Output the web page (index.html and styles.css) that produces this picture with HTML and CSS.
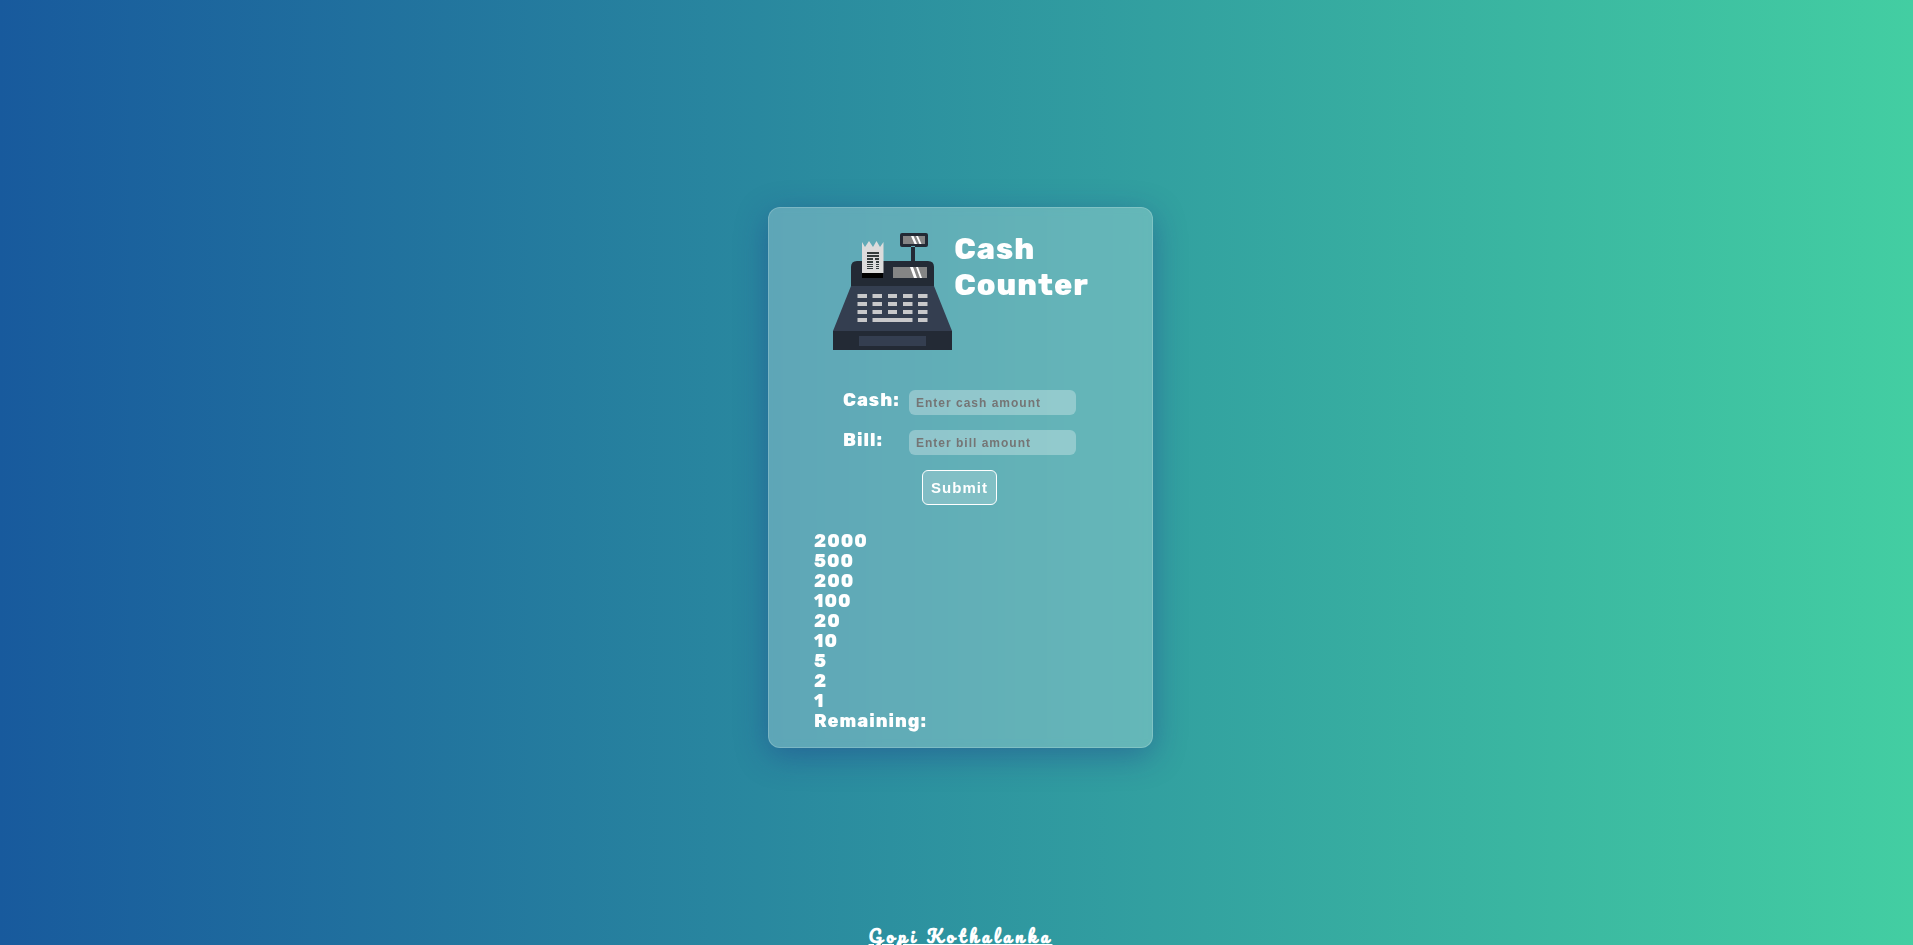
FILE: index.html
```html
<!DOCTYPE html>
<html lang="en">
<head>
<meta charset="utf-8">
<meta name="viewport" content="width=device-width, initial-scale=1">
<title>Cash Counter</title>
<link rel="stylesheet" href="styles.css">
</head>
<body>
<main class="page">
  <section class="card">
    <header class="card-header">
      <svg class="register" viewBox="0 0 120 120" aria-hidden="true">
        <path fill="#232a35" d="M79 13V40H83V13ZM70 0H94Q96 0 96 2V12Q96 14 94 14H70Q68 14 68 12V2Q68 0 70 0Z"/>
        <path fill="#858585" d="M71 3H93V11H71Z"/>
        <path fill="#fff" d="M79 3H81.500L85 11H82.500ZM84 3H86L89.500 11H87.500Z"/>
        <path fill="#232a35" d="M19 54V34Q19 28 25 28H96Q102 28 102 34V54Z"/>
        <path fill="#000" d="M30 39H51V45H30Z"/>
        <path fill="#dcdcdc" d="M30 9L33 14L37 8L41 14L44.500 8L48 14L51.500 9V40H30Z"/>
        <path fill="#343c3c" d="M35 19H47V21H35ZM35 22H47V24H35ZM35 25H41V27H35ZM35 28H41V30H35ZM35 31H41V32H35ZM35 33H41V34H35ZM35 35H41V36H35ZM43 25H47V27H43ZM44 28H47V30H44ZM44 31H47V32H44ZM44 33H47V34H44ZM44 35H47V36H44Z"/>
        <path fill="#858585" d="M61 34H95V45H61Z"/>
        <path fill="#fff" d="M78 34H81L85 45H82ZM84 34H86L90 45H88Z"/>
        <path fill="#343e50" d="M19 53H102L120 98H1Z"/>
        <path fill="#232a35" d="M1 98H120V117H1Z"/>
        <path fill="#343e50" d="M27 103H94V113H27Z"/>
        <path fill="none" stroke="#c8c8ca" stroke-width="4" d="M25.500 63H35M40.500 63H50M56 63H65M71 63H80.500M86 63H95.500M25.500 71H35M40.500 71H50M56 71H65M71 71H80.500M86 71H95.500M25.500 79H35M40.500 79H50M56 79H65M71 79H80.500M86 79H95.500M25.500 87H35M40.500 87H80.500M86 87H95.500"/>
      </svg>
      <h1 class="title">Cash<br>Counter</h1>
    </header>
    <form class="form">
      <label class="label" for="cash">Cash:</label>
      <input class="field" id="cash" type="text" placeholder="Enter cash amount">
      <label class="label" for="bill">Bill:</label>
      <input class="field" id="bill" type="text" placeholder="Enter bill amount">
      <button class="submit" type="button">Submit</button>
    </form>
    <ul class="notes">
      <li>2000</li>
      <li>500</li>
      <li>200</li>
      <li>100</li>
      <li>20</li>
      <li>10</li>
      <li>5</li>
      <li>2</li>
      <li>1</li>
      <li>Remaining:</li>
    </ul>
  </section>
</main>
<footer class="footer"><a class="author" href="#">Gopi Kothalanka</a></footer>
</body>
</html>
```
FILE: styles.css
```css
* {
  box-sizing: border-box;
}

body {
  margin: 0;
  height: 100vh;
  display: flex;
  flex-direction: column;
  overflow: hidden;
  color: #fff;
  font-family: Rubik, Inter, sans-serif;
  letter-spacing: 1px;
  background: linear-gradient(to right, #185a9d, #43cea2);
}

.page {
  flex: 1;
  display: flex;
  align-items: center;
  justify-content: center;
  padding: 32px 0 0 8px;
}

.card {
  width: 385px;
  padding: 23px 45px 16px;
  border: 1px solid rgba(255, 255, 255, 0.18);
  border-radius: 12px;
  background: rgba(255, 255, 255, 0.25);
  box-shadow: 0 8px 32px 0 rgba(31, 38, 135, 0.37);
  backdrop-filter: blur(4px);
}

.card-header {
  display: flex;
  justify-content: center;
  gap: 2px;
}

.register {
  width: 120px;
  height: 120px;
  margin-top: 2px;
}

.title {
  margin: 0;
  font-size: 30px;
  font-weight: 800;
  line-height: 36px;
}

.form {
  display: grid;
  grid-template-columns: 66px 167px;
  justify-content: center;
  row-gap: 15px;
  margin: 37px 2px 0 0;
}

.label {
  font-size: 18px;
  font-weight: 800;
  line-height: 20px;
}

.field {
  width: 100%;
  height: 25px;
  padding: 1px 7px 0;
  border: 0;
  border-radius: 6px;
  color: #fff;
  background: rgba(255, 255, 255, 0.3);
  font: bold 12px "Liberation Sans", Arial, sans-serif;
  letter-spacing: 1px;
}

.field::placeholder {
  color: #757575;
}

.submit {
  grid-column: 1 / -1;
  justify-self: center;
  height: 35px;
  padding: 0 8px;
  border: 1px solid #fff;
  border-radius: 6px;
  color: #fff;
  background: rgba(255, 255, 255, 0.2);
  font: bold 15px "Liberation Sans", Arial, sans-serif;
  letter-spacing: 1px;
}

.notes {
  margin: 26px 0 0;
  padding: 0;
  list-style: none;
  font-size: 18px;
  font-weight: 800;
  line-height: 20px;
}

.footer {
  flex: none;
  height: 22px;
  padding-left: 8px;
  text-align: center;
}

.author {
  color: #fff;
  font: bold 17px/26px Pacifico, "Liberation Serif", serif;
  letter-spacing: 4px;
}
```
